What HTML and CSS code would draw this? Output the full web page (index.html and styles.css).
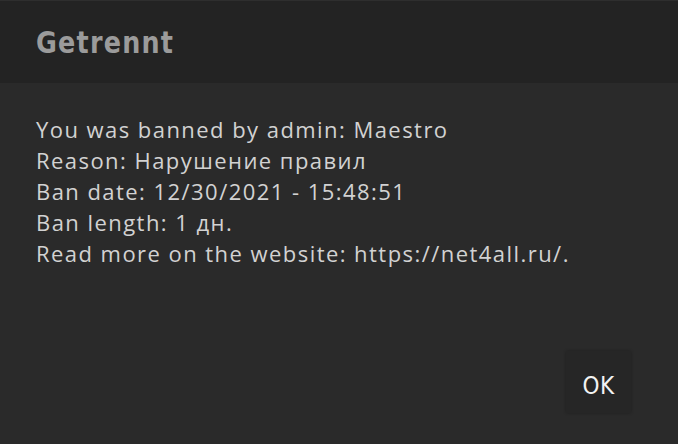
FILE: index.html
```html
<!DOCTYPE html>
<html>
<head>
<meta charset="utf-8">
<link rel="stylesheet" href="styles.css">
</head>
<body>
<div class="dialog">
  <header class="head"><h1 class="title">Getrennt</h1></header>
  <main class="body">
    <p class="msg">You was banned by admin: Maestro<br>Reason: Нарушение правил<br>Ban date: 12/30/2021 - 15:48:51<br>Ban length: 1 дн.<br>Read more on the website: https://net4all.ru/.</p>
    <div class="actions"><button class="ok">OK</button></div>
  </main>
</div>
</body>
</html>
```
FILE: styles.css
```css
html, body { margin: 0; padding: 0; }
body { width: 678px; height: 444px; background: #2a2a2a; overflow: hidden; }
.dialog { display: flex; flex-direction: column; height: 444px; }
.head { height: 83px; background: #232323; border-top: 1px solid #2e2e2e; box-sizing: border-box; display: flex; align-items: center; padding-left: 36px; }
.title { margin: 0; font-family: "DejaVu Sans", sans-serif; font-weight: bold; font-size: 31px; color: #9b9b9b; letter-spacing: 1.5px; transform: scaleX(0.82); transform-origin: left center; }
.body { flex: 1; display: flex; flex-direction: column; padding: 31px 47px 31px 36px; }
.msg { margin: 0; font-family: "Open Sans", sans-serif; font-size: 22px; line-height: 31px; letter-spacing: 1.45px; color: #d2d2d2; flex: 1; }
.actions { display: flex; justify-content: flex-end; }
.ok { width: 65px; height: 62px; background: #262626; border: none; box-shadow: 0 0 3px rgba(0,0,0,0.3); color: #f2f2f2; font-family: "DejaVu Sans", sans-serif; font-stretch: condensed; font-weight: normal; font-size: 24px; padding: 8px 0 0; letter-spacing: 0.5px; }
```
